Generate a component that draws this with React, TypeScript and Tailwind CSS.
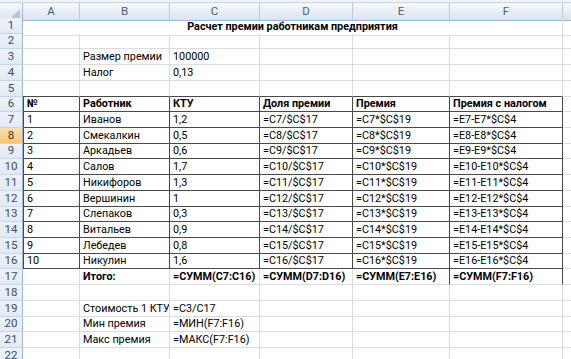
import React from "react";

type Row = {
  n: number;
  h: string;
  cells: string[];
  bold?: boolean;
};

const COLS = "grid grid-cols-[23px_57px_90px_90px_93px_97px_113px_1fr]";

const GRID = "border-r border-b border-[#dadcdd]";
const TABLE = "border-r border-b border-[#4a4a4a]";
const TOP = "border-r border-b border-r-[#dadcdd] border-b-[#4a4a4a]";
const SIDE = "border-r border-b border-r-[#4a4a4a] border-b-[#dadcdd]";

const people: [string, string][] = [
  ["Иванов", "1,2"],
  ["Смекалкин", "0,5"],
  ["Аркадьев", "0,6"],
  ["Салов", "1,7"],
  ["Никифоров", "1,3"],
  ["Вершинин", "1"],
  ["Слепаков", "0,3"],
  ["Витальев", "0,9"],
  ["Лебедев", "0,8"],
  ["Никулин", "1,6"],
];

// row heights of the zoomed sheet alternate 16 / 15 px
const heights: Record<number, string> = {
  2: "h-[15px]",
  6: "h-[15px]",
  9: "h-[15px]",
  13: "h-[15px]",
  16: "h-[15px]",
  20: "h-[15px]",
};

const rows: Row[] = [];
for (let n = 2; n <= 21; n++) {
  let cells = ["", "", "", "", "", ""];
  let bold = false;
  if (n === 3) cells = ["", "Размер премии", "100000", "", "", ""];
  if (n === 4) cells = ["", "Налог", "0,13", "", "", ""];
  if (n === 6) {
    cells = ["№", "Работник", "КТУ", "Доля премии", "Премия", "Премия с налогом"];
    bold = true;
  }
  if (n >= 7 && n <= 16) {
    const [name, ktu] = people[n - 7];
    cells = [
      String(n - 6),
      name,
      ktu,
      `=C${n}/$C$17`,
      `=C${n}*$C$19`,
      `=E${n}-E${n}*$C$4`,
    ];
  }
  if (n === 17) {
    cells = ["", "Итого:", "=СУММ(C7:C16)", "=СУММ(D7:D16)", "=СУММ(E7:E16)", "=СУММ(F7:F16)"];
    bold = true;
  }
  if (n === 19) cells = ["", "Стоимость 1 КТУ", "=C3/C17", "", "", ""];
  if (n === 20) cells = ["", "Мин премия", "=МИН(F7:F16)", "", "", ""];
  if (n === 21) cells = ["", "Макс премия", "=МАКС(F7:F16)", "", "", ""];
  rows.push({ n, h: heights[n] || "h-4", cells, bold });
}

function borderFor(n: number, c: number) {
  if (n >= 6 && n <= 16) return c === 0 ? `${TABLE} border-l` : TABLE;
  if (n === 5) return TOP;
  if (n === 17 && (c === 4 || c === 5)) return SIDE;
  return GRID;
}

const RowHead = ({ n, h }: { n: number; h: string }) => (
  <div
    className={`${h} flex items-center justify-center border-r border-b border-r-[#9eb6ce] border-b-[#c9d6e6] text-[11.5px] ${
      n === 8
        ? "bg-gradient-to-b from-[#fbe2b2] to-[#f5c672] text-[#3d3320]"
        : "bg-gradient-to-b from-[#eef3fa] to-[#e2eaf5] text-[#3b4d68]"
    }`}
  >
    {n}
  </div>
);

const ColHead = ({ label, last }: { label: string; last?: boolean }) => (
  <div
    className={`flex items-center justify-center border-b border-[#9eb6ce] bg-gradient-to-b from-[#f7f9fc] to-[#dbe3ef] text-[#4b5e78] text-[11.5px] ${
      last ? "" : "border-r border-r-[#b9c9dc]"
    }`}
  >
    {label}
  </div>
);

export default function App() {
  return (
    <div className="w-[571px] h-[359px] overflow-hidden bg-white font-['Roboto',sans-serif] text-[10.8px] text-black">
      <div className="h-[3px] bg-[#eef3f9] border-b border-[#c8d5e5]" />
      <div className={`${COLS} h-[15px]`}>
        <div className="flex items-end justify-end border-r border-b border-[#9eb6ce] bg-gradient-to-b from-[#f7f9fc] to-[#dbe3ef] pr-[2px] pb-[2px]">
          <svg width="9" height="9" viewBox="0 0 9 9">
            <polygon points="9,0 9,9 0,9" fill="#b5c6da" />
          </svg>
        </div>
        {["A", "B", "C", "D", "E", "F"].map((l) => (
          <ColHead key={l} label={l} />
        ))}
        <ColHead label="" last />
      </div>

      <div className={`${COLS} h-4`}>
        <RowHead n={1} h="h-4" />
        <div className={`col-span-6 flex items-center justify-center pt-px font-bold ${GRID}`}>
          Расчет премии работникам предприятия
        </div>
        <div className="border-b border-[#dadcdd]" />
      </div>

      {rows.map((r) => (
        <div key={r.n} className={`${COLS} ${r.h}`}>
          <RowHead n={r.n} h={r.h} />
          {r.cells.map((v, c) => (
            <div
              key={c}
              className={`flex items-center px-[3px] pt-px whitespace-nowrap overflow-hidden ${
                r.bold ? "font-bold" : ""
              } ${borderFor(r.n, c)}`}
            >
              {v}
            </div>
          ))}
          <div className="border-b border-[#dadcdd]" />
        </div>
      ))}

      <div className={`${COLS} h-4`}>
        <RowHead n={22} h="h-4" />
        {[0, 1, 2, 3, 4, 5].map((c) => (
          <div key={c} className={GRID} />
        ))}
        <div />
      </div>
    </div>
  );
}
